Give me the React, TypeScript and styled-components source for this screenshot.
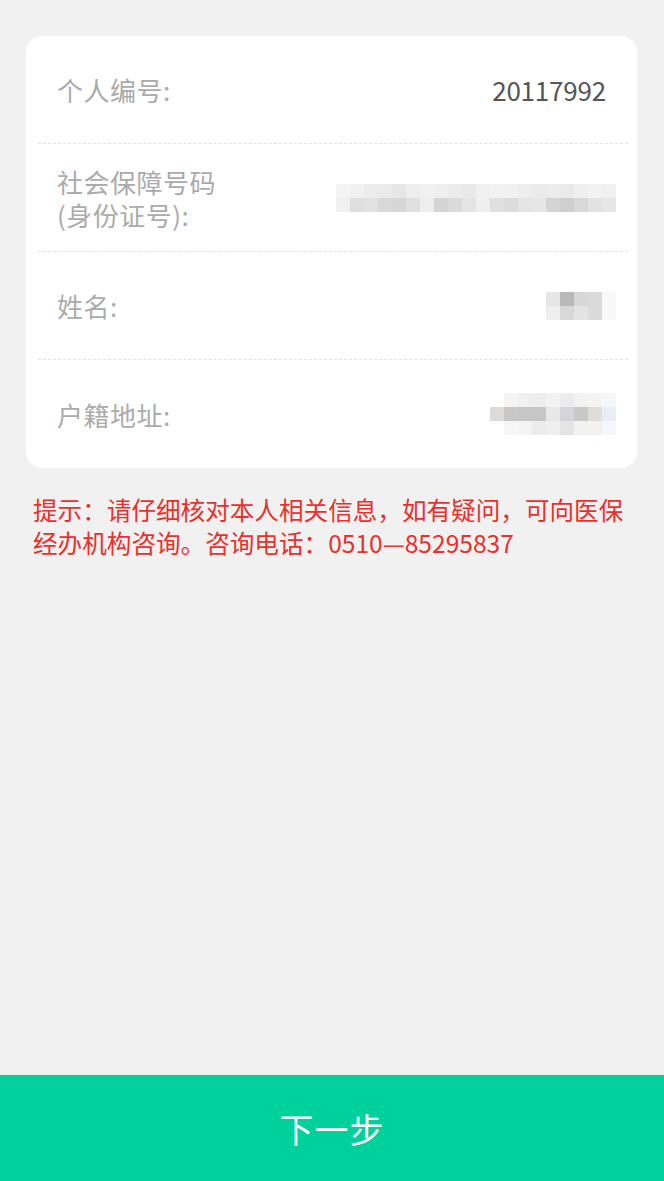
import React from "react";
import styled, { createGlobalStyle } from "styled-components";

const GlobalStyle = createGlobalStyle`
  html, body {
    margin: 0;
    padding: 0;
    background: #f1f1f1;
  }
  body {
    font-family: "Noto Sans CJK SC", "Noto Sans", sans-serif;
  }
`;

const Page = styled.div`
  min-height: 100vh;
  display: flex;
  flex-direction: column;
  background: #f1f1f1;
`;

const InfoCard = styled.div`
  margin: 36px 27px 0 26px;
  background: #fff;
  border-radius: 16px;
  display: flex;
  flex-direction: column;
`;

const InfoRow = styled.div<{ last?: boolean }>`
  height: 108px;
  box-sizing: border-box;
  margin: 0 9px 0 12px;
  padding: 0 12px 0 19px;
  display: flex;
  align-items: center;
  justify-content: space-between;
  border-bottom: ${(p) => (p.last ? "none" : "1px dashed #e2e2e2")};
`;

const Label = styled.div`
  display: flex;
  flex-direction: column;
  font-size: 26px;
  line-height: 33px;
  color: #ababab;
  letter-spacing: 0.5px;
`;

const LabelLine = styled.span`
  display: block;
`;

const Value = styled.div`
  font-size: 26px;
  color: #555;
  letter-spacing: -0.2px;
  margin-right: 10px;
`;

const Mosaic = styled.div<{ cols: number }>`
  display: grid;
  grid-template-columns: repeat(${(p) => p.cols}, 14px);
  grid-auto-rows: 14px;
  filter: blur(0.4px);
`;

const Hint = styled.p`
  margin: 25px 33px 0 33px;
  font-size: 24.6px;
  line-height: 33px;
  color: #e8302c;
`;

const NextButton = styled.button`
  margin-top: auto;
  height: 106px;
  width: 100%;
  border: none;
  background: #00d19c;
  color: #fff;
  font-family: "Noto Sans CJK SC", sans-serif;
  font-size: 34px;
  letter-spacing: 1px;
  cursor: pointer;
`;

const idMosaic = [
  "#f3f3f3", "#f1f1f1", "#ececec", "#ebebeb", "#e6e6e6", "#eeeeee", "#f2f0ee", "#efefef", "#ececec", "#e9e9e9",
  "#f0f0f0", "#f2f2f2", "#f1f1f1", "#eeeeee", "#ebebeb", "#ececec", "#eaeaea", "#efefef", "#f2f2f2", "#f0f0f0",
  "#f0f0f0", "#dedede", "#e2e2e2", "#d9d9d9", "#d6d6d6", "#e0e0e0", "#eeeeee", "#d4d4d4", "#dadada", "#e4e4e6",
  "#efefef", "#e0e0e0", "#dcdcdc", "#e4e4e4", "#e6e6e6", "#d4d4d4", "#cfcfcf", "#d8d8d8", "#e2e2e2", "#e6e6e8",
];

const nameMosaic = [
  "#e6e6e6", "#b9b9b9", "#d7d7d7", "#dadada", "#f8f8f8",
  "#efefef", "#d8d8d8", "#e3e3e3", "#dadada", "#f8f8f8",
];

const addrMosaic = [
  "#ffffff", "#f4f4f4", "#f0f0f0", "#eeeeee", "#f2f2f2", "#ececec", "#f2f2f2", "#f6f4f2", "#f5f8fb",
  "#dedad8", "#c8c8c8", "#c6c6c6", "#c6c6c6", "#e8e8e8", "#d4d4dc", "#c8c8c8", "#e0dcd8", "#e8eef6",
  "#ffffff", "#f6f6f6", "#f4f4f4", "#ececec", "#efefef", "#e4e4e4", "#f2f2f2", "#f4f2ee", "#f4f8fc",
];

function Blur(props: { cols: number; cells: string[] }) {
  return (
    <Mosaic cols={props.cols}>
      {props.cells.map((c, i) => (
        <div key={i} style={{ background: c }} />
      ))}
    </Mosaic>
  );
}

export default function App() {
  return (
    <Page>
      <GlobalStyle />
      <InfoCard>
        <InfoRow>
          <Label>个人编号:</Label>
          <Value>20117992</Value>
        </InfoRow>
        <InfoRow>
          <Label>
            <LabelLine>社会保障号码</LabelLine>
            <LabelLine>(身份证号):</LabelLine>
          </Label>
          <Blur cols={20} cells={idMosaic} />
        </InfoRow>
        <InfoRow>
          <Label>姓名:</Label>
          <Blur cols={5} cells={nameMosaic} />
        </InfoRow>
        <InfoRow last>
          <Label>户籍地址:</Label>
          <Blur cols={9} cells={addrMosaic} />
        </InfoRow>
      </InfoCard>
      <Hint>
        提示：请仔细核对本人相关信息，如有疑问，可向医保经办机构咨询。咨询电话：0510—85295837
      </Hint>
      <NextButton>下一步</NextButton>
    </Page>
  );
}
